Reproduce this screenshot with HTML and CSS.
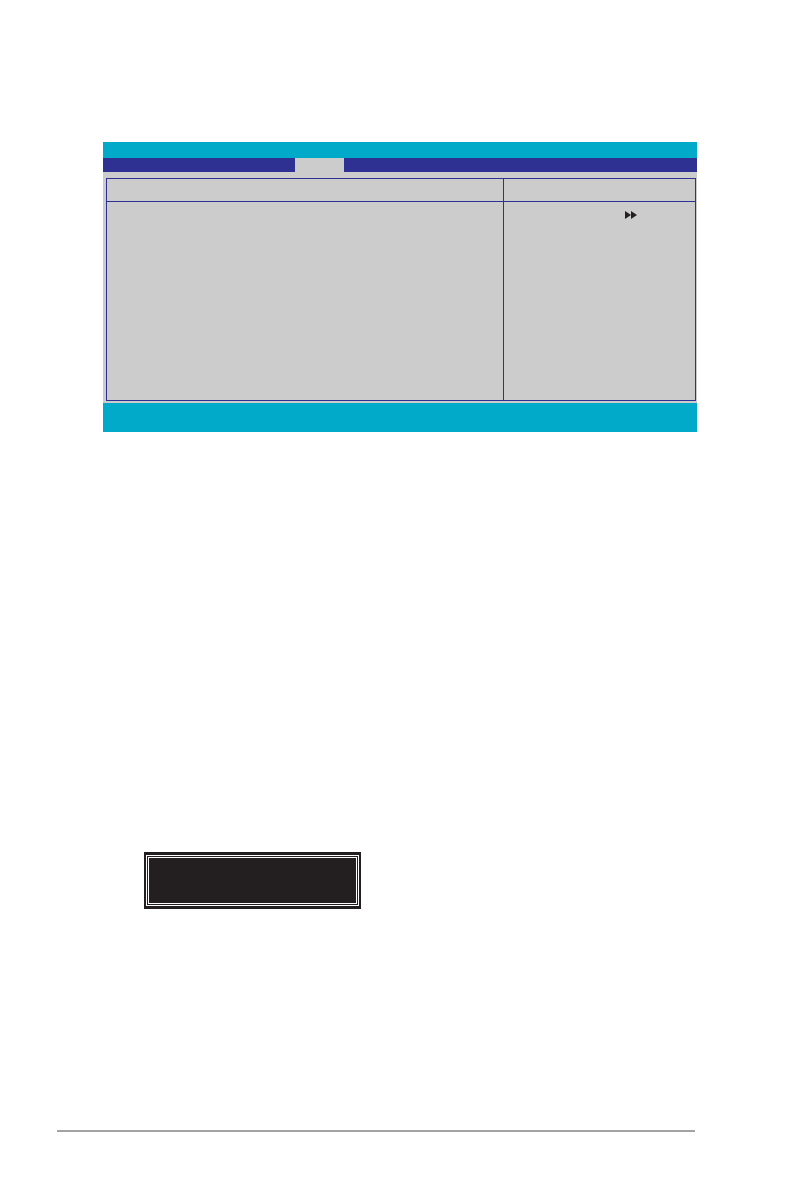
FILE: index.html
```html
<!DOCTYPE html>
<html>
<head>
<meta charset="utf-8">
<link rel="stylesheet" href="styles.css">
</head>
<body>
<div class="page">
  <div class="bios">
    <div class="topbar"></div>
    <div class="menubar">
      <div class="menu-spacer"></div>
      <div class="menu-tab"></div>
    </div>
    <div class="panel">
      <div class="frame">
        <div class="cell head left"></div>
        <div class="cell head right"></div>
        <div class="cell body left"></div>
        <div class="cell body right">
          <svg class="arrow" width="12" height="8" viewBox="0 0 12 8">
            <polygon points="0,0 6,4 0,8" fill="#231f20"/>
            <polygon points="6,0 12,4 6,8" fill="#231f20"/>
          </svg>
        </div>
      </div>
    </div>
    <div class="statusbar"></div>
  </div>
  <div class="popup">
    <div class="ring1">
      <div class="ring2"></div>
    </div>
  </div>
  <div class="footer-rule"></div>
</div>
</body>
</html>
```
FILE: styles.css
```css
html, body {
  margin: 0;
  padding: 0;
  background: #ffffff;
  font-family: "Liberation Sans", Arial, sans-serif;
}
.page {
  width: 794px;
  height: 1196px;
  padding-top: 142px;
  box-sizing: border-box;
}
.bios {
  width: 594px;
  margin-left: 103px;
}
.topbar {
  height: 16px;
  background: #00aac8;
}
.menubar {
  height: 14px;
  background: #2e3192;
  display: flex;
}
.menu-spacer {
  width: 192px;
}
.menu-tab {
  width: 49px;
  background: #cccccc;
}
.panel {
  background: #cccccc;
  padding: 6px 1px 2px 3px;
}
.frame {
  border: 1px solid #2e3192;
  display: grid;
  grid-template-columns: 397px 1fr;
  grid-template-rows: 23px 198px;
}
.cell.left {
  border-right: 1px solid #2e3192;
}
.cell.head {
  border-bottom: 1px solid #2e3192;
}
.cell.body.right {
  padding: 9px 0 0 121px;
}
.arrow {
  display: block;
}
.statusbar {
  height: 29px;
  background: #00aac8;
}
.popup {
  margin-top: 420px;
  margin-left: 144px;
  width: 217px;
  height: 57px;
  background: #231f20;
  padding: 3px 2px;
  box-sizing: border-box;
  display: flex;
}
.ring1 {
  flex: 1;
  border: 1px solid #ffffff;
  padding: 1px;
  display: flex;
}
.ring2 {
  flex: 1;
  border: 1px solid #ffffff;
}
.footer-rule {
  margin-top: 221px;
  margin-left: 57px;
  width: 638px;
  height: 2px;
  background: #a3a3a3;
}
```
